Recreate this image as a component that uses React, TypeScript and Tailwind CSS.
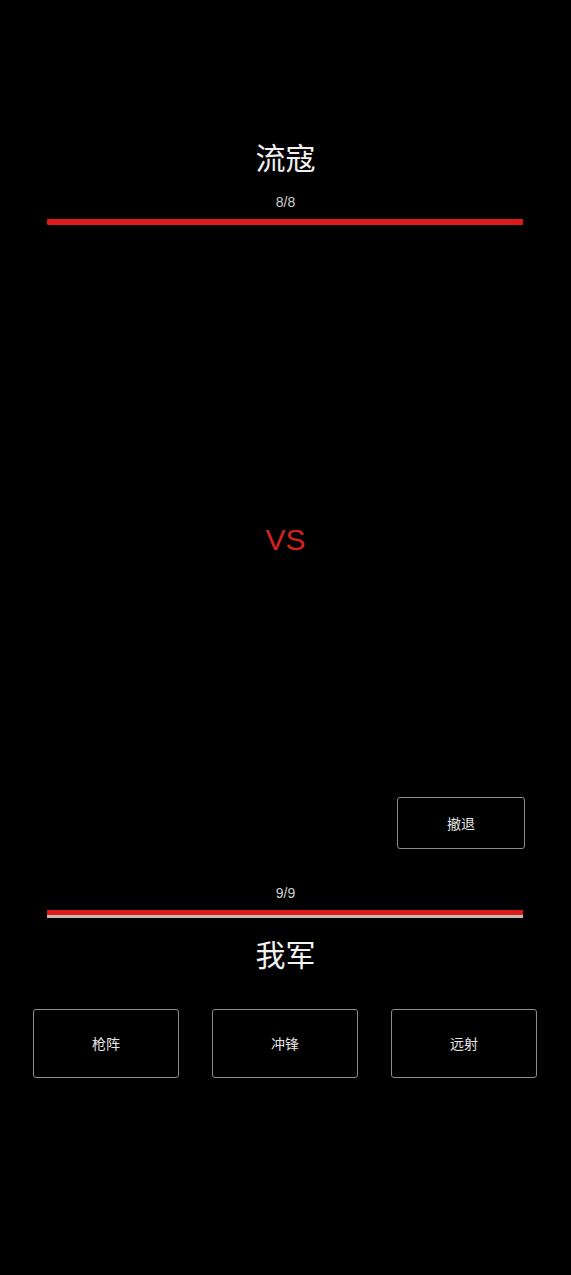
export default function App() {
  const font = { fontFamily: '"Noto Sans CJK SC", "Noto Sans", sans-serif' };
  return (
    <div
      style={font}
      className="w-[571px] h-[1275px] bg-black flex flex-col items-center text-white"
    >
      {/* Enemy */}
      <div className="mt-[138px] text-[30px] leading-[36px] text-[#f2f2f2]">流寇</div>
      <div className="mt-[18px] text-[14px] leading-[20px] text-[#cfcfcf] font-['Liberation_Sans']">8/8</div>
      <div className="self-start ml-[47px] mt-[7px] w-[476px] h-[6px] bg-[#dc1a1a] rounded-[1px]" />

      <div className="mt-[297px] text-[30px] leading-[36px] text-[#d42222] font-['Liberation_Sans']">VS</div>

      <div className="self-end mr-[46px] mt-[239px]">
        <button className="w-[128px] h-[52px] border border-[#8c8c8c] rounded-[3px] text-[14px] text-[#e5e5e5]">
          撤退
        </button>
      </div>

      {/* Player */}
      <div className="mt-[34px] text-[14px] leading-[20px] text-[#cfcfcf] font-['Liberation_Sans']">9/9</div>
      <div className="self-start ml-[47px] mt-[7px] w-[476px] h-[8px] bg-[#dc1a1a] border-b-[3px] border-[#c4bab7]" />
      <div className="mt-[17px] text-[30px] leading-[36px] text-[#f2f2f2]">我军</div>

      <div className="self-start ml-[33px] mt-[38px] flex gap-[33px]">
        {["枪阵", "冲锋", "远射"].map((t) => (
          <button
            key={t}
            className="w-[146px] h-[69px] border border-[#8c8c8c] rounded-[3px] text-[14px] text-[#e5e5e5]"
          >
            {t}
          </button>
        ))}
      </div>
    </div>
  );
}
